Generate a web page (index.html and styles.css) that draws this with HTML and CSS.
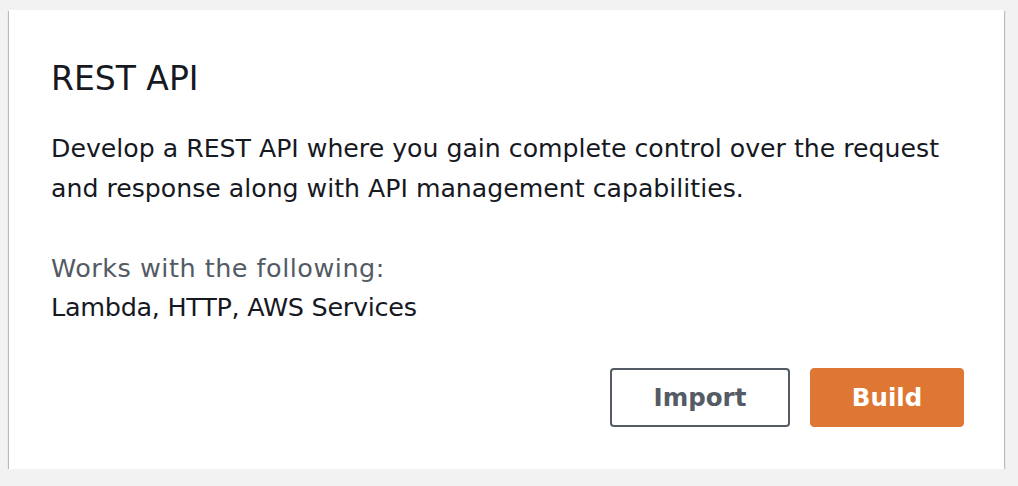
FILE: index.html
```html
<!DOCTYPE html>
<html lang="en">
<head>
<meta charset="utf-8">
<title>REST API</title>
<link rel="stylesheet" href="styles.css">
</head>
<body>
  <div class="card">
    <h2 class="card-title">REST API</h2>
    <p class="card-desc">Develop a REST API where you gain complete control over the request and response along with API management capabilities.</p>
    <div class="works">
      <div class="works-label">Works with the following:</div>
      <div class="works-list">Lambda, HTTP, AWS Services</div>
    </div>
    <div class="actions">
      <button class="btn btn-normal" type="button">Import</button>
      <button class="btn btn-primary" type="button">Build</button>
    </div>
  </div>
</body>
</html>
```

FILE: styles.css
```css
html, body {
  margin: 0;
  padding: 0;
  background: #f2f2f2;
}
body {
  font-family: "DejaVu Sans", "Open Sans", sans-serif;
  color: #16191f;
  padding: 10px 14px 0 9px;
}
.card {
  background: #ffffff;
  box-shadow: 0 2px 1px rgba(0, 28, 36, 0.38), 1px 1px 1px rgba(0, 28, 36, 0.2), -1px 1px 1px rgba(0, 28, 36, 0.2);
  padding: 49px 40px 42px 42px;
  display: flex;
  flex-direction: column;
}
.card-title {
  margin: 0;
  font-size: 33px;
  line-height: 40px;
  font-weight: 400;
}
.card-desc {
  margin: 30px 0 0;
  font-size: 25.2px;
  line-height: 40px;
  max-width: 913px;
}
.works {
  margin-top: 40px;
  font-size: 25.5px;
  line-height: 39px;
}
.works-label {
  color: #545b64;
  letter-spacing: 0.5px;
}
.works-list {
  letter-spacing: -0.3px;
}
.actions {
  margin-top: 41px;
  display: flex;
  justify-content: flex-end;
  gap: 20px;
}
.btn {
  font-family: inherit;
  font-size: 24.5px;
  font-weight: 700;
  height: 59px;
  border-radius: 4px;
  cursor: pointer;
}
.btn-normal {
  width: 180px;
  background: #ffffff;
  color: #545b64;
  border: 2px solid #545b64;
}
.btn-primary {
  width: 154px;
  background: #dd7733;
  color: #ffffff;
  border: 1px solid #dd7733;
}
```
